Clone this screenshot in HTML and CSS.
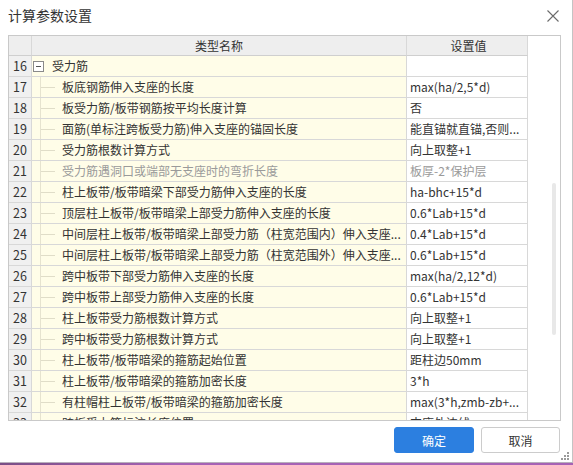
FILE: index.html
```html
<!DOCTYPE html>
<html lang="zh-CN">
<head>
<meta charset="utf-8">
<title>计算参数设置</title>
<link rel="stylesheet" href="styles.css">
</head>
<body>
<div class="dialog">
  <div class="titlebar">
    <span class="title">计算参数设置</span>
    <svg class="close" width="12" height="12" viewBox="0 0 12 12"><path d="M0.5 0.5 L11.5 11.5 M11.5 0.5 L0.5 11.5" stroke="#6b6b6b" stroke-width="1.1" fill="none"/></svg>
  </div>
  <div class="grid">
    <div class="table">
      <div class="row head">
        <div class="c num"></div>
        <div class="c name center">类型名称</div>
        <div class="c val center">设置值</div>
      </div>
      <div class="row">
        <div class="c num">16</div>
        <div class="c name group"><span class="box"></span><span>受力筋</span></div>
        <div class="c val"></div>
      </div>
      <div class="row"><div class="c num">17</div><div class="c name child">板底钢筋伸入支座的长度</div><div class="c val">max(ha/2,5*d)</div></div>
      <div class="row"><div class="c num">18</div><div class="c name child">板受力筋/板带钢筋按平均长度计算</div><div class="c val">否</div></div>
      <div class="row"><div class="c num">19</div><div class="c name child">面筋(单标注跨板受力筋)伸入支座的锚固长度</div><div class="c val">能直锚就直锚,否则...</div></div>
      <div class="row"><div class="c num">20</div><div class="c name child">受力筋根数计算方式</div><div class="c val">向上取整+1</div></div>
      <div class="row dim"><div class="c num">21</div><div class="c name child">受力筋遇洞口或端部无支座时的弯折长度</div><div class="c val">板厚-2*保护层</div></div>
      <div class="row"><div class="c num">22</div><div class="c name child">柱上板带/板带暗梁下部受力筋伸入支座的长度</div><div class="c val">ha-bhc+15*d</div></div>
      <div class="row"><div class="c num">23</div><div class="c name child">顶层柱上板带/板带暗梁上部受力筋伸入支座的长度</div><div class="c val">0.6*Lab+15*d</div></div>
      <div class="row"><div class="c num">24</div><div class="c name child">中间层柱上板带/板带暗梁上部受力筋（柱宽范围内）伸入支座...</div><div class="c val">0.4*Lab+15*d</div></div>
      <div class="row"><div class="c num">25</div><div class="c name child">中间层柱上板带/板带暗梁上部受力筋（柱宽范围外）伸入支座...</div><div class="c val">0.6*Lab+15*d</div></div>
      <div class="row"><div class="c num">26</div><div class="c name child">跨中板带下部受力筋伸入支座的长度</div><div class="c val">max(ha/2,12*d)</div></div>
      <div class="row"><div class="c num">27</div><div class="c name child">跨中板带上部受力筋伸入支座的长度</div><div class="c val">0.6*Lab+15*d</div></div>
      <div class="row"><div class="c num">28</div><div class="c name child">柱上板带受力筋根数计算方式</div><div class="c val">向上取整+1</div></div>
      <div class="row"><div class="c num">29</div><div class="c name child">跨中板带受力筋根数计算方式</div><div class="c val">向上取整+1</div></div>
      <div class="row"><div class="c num">30</div><div class="c name child">柱上板带/板带暗梁的箍筋起始位置</div><div class="c val">距柱边50mm</div></div>
      <div class="row"><div class="c num">31</div><div class="c name child">柱上板带/板带暗梁的箍筋加密长度</div><div class="c val">3*h</div></div>
      <div class="row"><div class="c num">32</div><div class="c name child">有柱帽柱上板带/板带暗梁的箍筋加密长度</div><div class="c val">max(3*h,zmb-zb+...</div></div>
      <div class="row"><div class="c num">33</div><div class="c name child">跨板受力筋标注长度位置</div><div class="c val">支座外边线</div></div>
    </div>
    <div class="vscroll"><div class="thumb"></div></div>
  </div>
  <div class="footer">
    <button class="btn primary">确定</button>
    <button class="btn">取消</button>
  </div>
  <svg class="grip" width="8" height="8" viewBox="0 0 8 8">
    <rect x="6" y="0" width="2" height="2" fill="#9a9a9a"/>
    <rect x="3" y="3" width="2" height="2" fill="#9a9a9a"/>
    <rect x="6" y="3" width="2" height="2" fill="#9a9a9a"/>
    <rect x="0" y="6" width="2" height="2" fill="#9a9a9a"/>
    <rect x="3" y="6" width="2" height="2" fill="#9a9a9a"/>
    <rect x="6" y="6" width="2" height="2" fill="#9a9a9a"/>
  </svg>
</div>
<div class="taskbar"></div>
</body>
</html>
```
FILE: styles.css
```css
* { box-sizing: border-box; }
html, body {
  margin: 0;
  padding: 0;
  background: #ffffff;
}
body {
  width: 573px;
  height: 465px;
  overflow: hidden;
  font-family: "Microsoft YaHei", "Noto Sans CJK SC", "Noto Sans", sans-serif;
  color: #333333;
  font-size: 12px;
}
.dialog {
  position: relative;
  width: 573px;
  height: 463px;
  border-right: 1px solid #c4c4c4;
  border-bottom: 1px solid #b8b0bc;
  background: #ffffff;
}
.titlebar {
  height: 30px;
  display: flex;
  align-items: center;
  justify-content: space-between;
  padding: 0 13px 0 8px;
}
.title {
  font-size: 14px;
  color: #333333;
  line-height: 16px;
}
.close { display: block; margin-top: 1px; }
.grid {
  margin: 5px 0 0 8px;
  width: 553px;
  height: 386px;
  border: 1px solid #c9c9c9;
  display: flex;
  overflow: hidden;
}
.table {
  width: 519px;
  flex: none;
  display: flex;
  flex-direction: column;
}
.row {
  display: grid;
  grid-template-columns: 23px 375px 121px;
  height: 21px;
  flex: none;
}
.row.head { height: 20px; }
.c {
  border-right: 1px solid #d8d8d8;
  border-bottom: 1px solid #d8d8d8;
  white-space: nowrap;
  overflow: hidden;
  line-height: 20px;
  position: relative;
}
.head .c {
  background: #eeeeee;
  line-height: 19px;
  border-bottom-color: #cfcfcf;
}
.center { text-align: center; }
.num {
  background: #f0f0f0;
  text-align: center;
  font-size: 12.5px;
}
.name {
  background: #fffde8;
}
.val {
  background: #ffffff;
  padding-left: 3px;
}
.group {
  display: flex;
  align-items: center;
  padding-left: 1px;
  gap: 8px;
}
.box {
  width: 11px;
  height: 11px;
  border: 1px solid #8a8a8a;
  background: #ffffff;
  position: relative;
  flex: none;
}
.box::after {
  content: "";
  position: absolute;
  left: 2px;
  top: 4px;
  width: 5px;
  height: 1px;
  background: #555555;
}
.child { padding-left: 30px; }
.child::before {
  content: "";
  position: absolute;
  left: 8px;
  top: 0;
  bottom: -1px;
  width: 1px;
  background: #e6e3cf;
}
.child::after {
  content: "";
  position: absolute;
  left: 9px;
  top: 10px;
  width: 14px;
  height: 1px;
  background: #e0ddc8;
}
.dim .name, .dim .val { color: #9a9a9a; }
.vscroll {
  flex: 1;
  padding: 147px 0 0 24px;
  background: #ffffff;
}
.thumb {
  width: 4px;
  height: 152px;
  background: #e8e8e8;
  border-radius: 2px;
}
.footer {
  display: flex;
  justify-content: flex-end;
  gap: 7px;
  margin-top: 6px;
  padding-right: 12px;
}
.btn {
  width: 79px;
  height: 26px;
  border: 1px solid #cccccc;
  border-radius: 3px;
  background: #ffffff;
  color: #333333;
  font-family: inherit;
  font-size: 12px;
  padding: 0;
}
.btn.primary {
  width: 80px;
  background: #2c7fe0;
  border-color: #2c7fe0;
  color: #ffffff;
}
.grip {
  position: absolute;
  right: 3px;
  bottom: 2px;
}
.taskbar {
  height: 2px;
  background: linear-gradient(90deg, #7a4e86, #a662b5 30%, #a662b5);
}
```
